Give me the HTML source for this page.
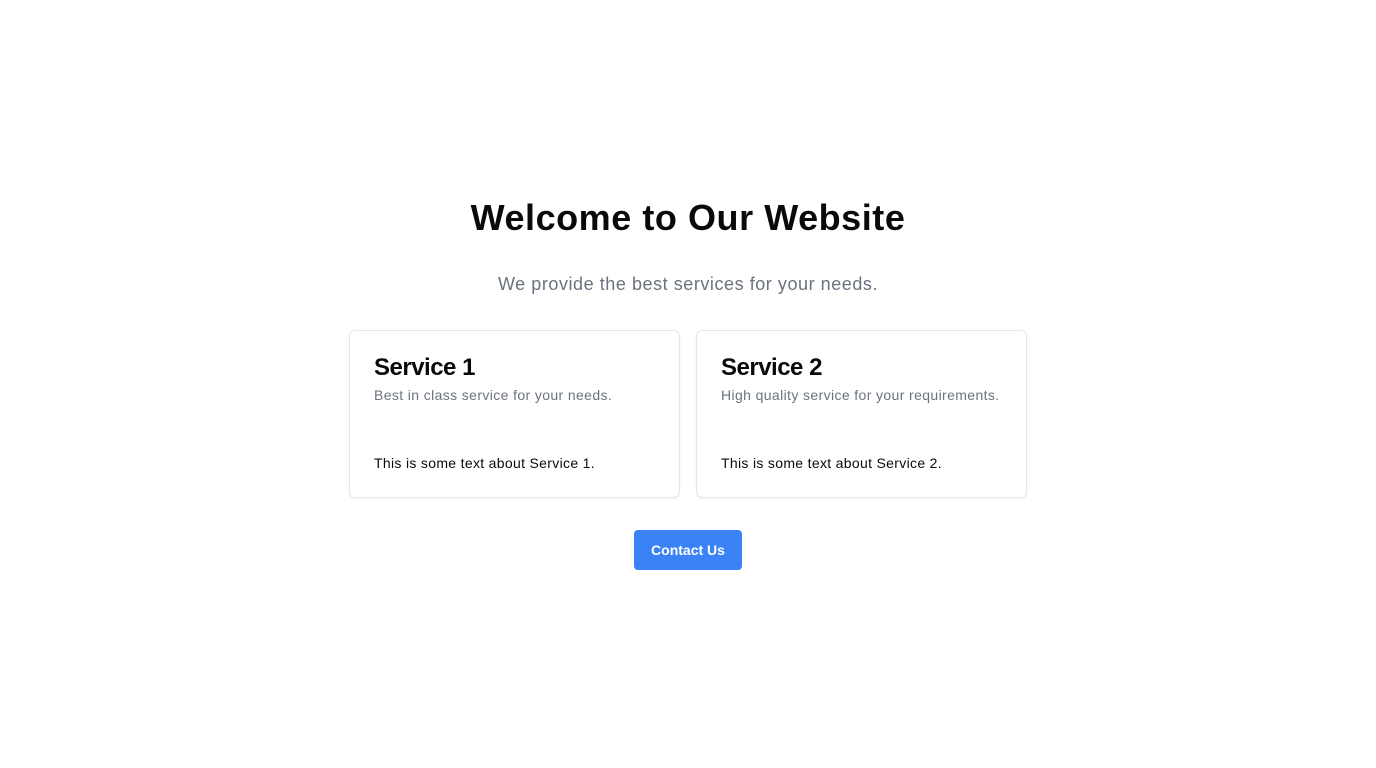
<!DOCTYPE html>
<html><head><style>
*{margin:0;padding:0;box-sizing:border-box}
body{width:1376px;height:768px;background:#fff;font-family:"Liberation Sans",sans-serif;position:relative;color:#0a0a0a}
h1{position:absolute;top:196px;left:0;width:1376px;text-align:center;font-size:36px;font-weight:bold;line-height:44px;letter-spacing:0.55px}
.sub{position:absolute;top:272px;left:0;width:1376px;text-align:center;font-size:18px;color:#6b7280;line-height:24px;letter-spacing:0.55px}
.card{position:absolute;top:330px;width:331px;height:168px;border:1px solid #e5e7eb;border-radius:6px;box-shadow:0 1px 2px rgba(0,0,0,.05);padding:0 24px}
.card h2{position:absolute;top:22px;left:24px;font-size:24px;font-weight:bold;line-height:30px;letter-spacing:-0.5px}
.card .d{position:absolute;top:56px;left:24px;font-size:14px;color:#6b7280;white-space:nowrap;letter-spacing:0.38px}
.card .t{position:absolute;top:124px;left:24px;font-size:14px;white-space:nowrap;letter-spacing:0.32px}
.btn{position:absolute;left:634px;top:530px;width:108px;height:40px;background:#3b82f6;border-radius:4px;color:#fff;font-weight:bold;font-size:14px;line-height:40px;text-align:center}
</style></head><body>
<h1>Welcome to Our Website</h1>
<div class="sub">We provide the best services for your needs.</div>
<div class="card" style="left:349px"><h2>Service 1</h2><div class="d">Best in class service for your needs.</div><div class="t">This is some text about Service 1.</div></div>
<div class="card" style="left:696px"><h2>Service 2</h2><div class="d">High quality service for your requirements.</div><div class="t">This is some text about Service 2.</div></div>
<div class="btn">Contact Us</div>
</body></html>
